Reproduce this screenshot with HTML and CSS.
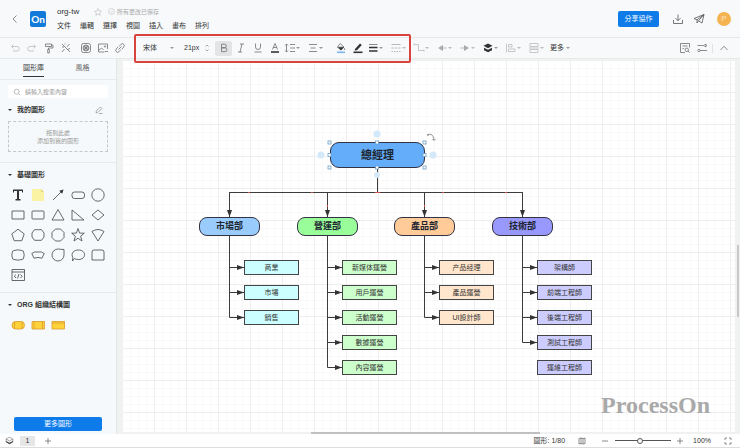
FILE: index.html
```
<!DOCTYPE html>
<html lang="zh-Hant">
<head>
	<meta charset="utf-8">
	<title>org-tw</title>
	<link rel="stylesheet" href="styles.css">
</head>
<body>
	<header class="header">
		<button class="icon-btn back" aria-label="返回"><svg width="8" height="10" viewBox="0 0 8 10"><path d="M5.5 1.5 2 5l3.5 3.5"/></svg></button>
		<div class="logo">On</div>
		<div class="doc">
			<div class="doc-title">
				<span class="doc-name">org-tw</span>
				<svg class="pale" width="8" height="8" viewBox="0 0 10 10"><path d="m5 .8 1.3 2.8 3 .4-2.2 2.1.6 3L5 7.6 2.3 9.100l.6-3L.7 4l3-.4z"/></svg>
				<svg class="pale saved-icon" width="7" height="7" viewBox="0 0 10 10"><circle cx="5" cy="5" r="4.2"/><path d="m3 5 1.5 1.5L7.2 3.7"/></svg>
				<span class="saved">所有更改已保存</span>
			</div>
			<nav class="menu">
				<button>文件</button>
				<button>編輯</button>
				<button>選擇</button>
				<button>視圖</button>
				<button>插入</button>
				<button>畫布</button>
				<button>排列</button>
			</nav>
		</div>
		<div class="header-right">
			<button class="share">分享協作</button>
			<button class="icon-btn" aria-label="下載"><svg width="12" height="12" viewBox="0 0 12 12"><path d="M6 1.5v6M3.5 5.2 6 7.7l2.5-2.5M1.5 7v3.5h9V7"/></svg></button>
			<button class="icon-btn" aria-label="發佈"><svg width="12" height="12" viewBox="0 0 12 12"><path d="M1 5.5 11 1.5 9 10 5.500 7.800 4 10V6.800zM4 6.800 11 1.500 5.500 7.800"/></svg></button>
			<span class="avatar">P</span>
		</div>
	</header>

	<div class="toolbar">
		<div class="group">
			<button class="tool pale" aria-label="撤銷"><svg width="12" height="12" viewBox="0 0 12 12"><path d="M4.5 2.500 2.500 4.500l2 2M2.500 4.500H8a2 2 0 0 1 0 4.500H4"/></svg></button>
			<button class="tool pale" aria-label="重做"><svg width="12" height="12" viewBox="0 0 12 12"><path d="m7.500 2.500 2 2-2 2M9.500 4.500H4A2 2 0 0 0 4 9h4"/></svg></button>
			<button class="tool" aria-label="格式刷"><svg width="12" height="12" viewBox="0 0 12 12"><path d="M2.500 2h6v2.500h-6zM8.500 3.200H10V6H5.500v1.500M4.700 7.500h1.600V11H4.700z"/></svg></button>
			<button class="tool" aria-label="美化"><svg width="12" height="12" viewBox="0 0 12 12"><path d="m2 2 8 8M4.500 7 2 10M9.500 2 7 4.800M2 5h2M7.500 7.500l2.500-1M5 1.500v1"/></svg></button>
		</div>
		<div class="group">
			<button class="tool" aria-label="主題"><svg width="12" height="12" viewBox="0 0 12 12"><rect x="1.500" y="1.500" width="9" height="9" rx="2"/><circle cx="6" cy="6" r="3"/><path d="M6 3v6M3 6h6M4 4l4 4M8 4 4 8"/></svg></button>
			<button class="tool" aria-label="圖片"><svg width="12" height="12" viewBox="0 0 12 12"><path d="M10.500 7V2h-9v8h6M1.500 8.500 4.500 6l2 2M8 9.500h3"/><circle cx="8" cy="4.500" r=".7"/></svg></button>
			<button class="tool" aria-label="連結"><svg width="12" height="12" viewBox="0 0 12 12"><path d="M5 4.500 7 2.300a1.900 1.900 0 0 1 2.700 2.700L8 7M7 7.500 5 9.700A1.900 1.900 0 0 1 2.300 7L4 5M4.500 7.500l3-3"/></svg></button>
		</div>
		<div class="font-group">
			<label class="font"><select aria-label="字體"><option>宋体</option></select><i class="caret"></i></label>
			<input class="size" type="text" value="21px" aria-label="字號">
			<svg class="spin" width="6" height="10" viewBox="0 0 6 10"><path d="M1.500 3.500 3 2l1.500 1.500M1.500 6.500 3 8l1.500-1.500"/></svg>
		</div>
		<div class="group">
			<button class="tool on" aria-label="粗體"><svg width="12" height="12" viewBox="0 0 12 12"><path d="M3.500 2.200h3a1.800 1.800 0 0 1 0 3.600h-3zM3.500 5.800H7a1.950 1.950 0 0 1 0 3.900H3.500z"/></svg></button>
			<button class="tool" aria-label="斜體"><svg width="12" height="12" viewBox="0 0 12 12"><path d="M5 2h4M3 10h4M7 2 5 10"/></svg></button>
			<button class="tool" aria-label="底線"><svg width="12" height="12" viewBox="0 0 12 12"><path d="M3.500 1.500V5a2.500 2.500 0 0 0 5 0V1.500M2.500 10h7"/></svg></button>
			<button class="tool" aria-label="文字顏色"><svg width="12" height="12" viewBox="0 0 12 12"><path d="M3.500 7.500 6 1.500l2.500 6M4.200 5.500h3.600"/><path class="thick" d="M2 10h8"/></svg></button>
			<button class="drop" aria-label="行高"><svg width="12" height="12" viewBox="0 0 12 12"><path d="M2.500 2v8M1 3.500 2.500 2 4 3.500M1 8.500 2.500 10 4 8.500M6 2.500h5M6 6h5M6 9.500h5"/></svg><i class="caret"></i></button>
			<button class="drop" aria-label="對齊"><svg width="12" height="12" viewBox="0 0 12 12"><path d="M2 2.500h8M3.500 6h5M2 9.500h8"/></svg><i class="caret"></i></button>
		</div>
		<div class="group">
			<button class="tool" aria-label="填充"><svg width="12" height="12" viewBox="0 0 12 12"><path d="m5 1.500 4 3.500-3 3.200-3.500-3zM2.500 5.200H9"/><path class="solid" d="M3 5.200h6L6 8.200zM9.500 6l.8 1.500H8.900z"/><path class="thick blue" d="M2 10.300h8"/></svg></button>
			<button class="tool" aria-label="線條顏色"><svg width="12" height="12" viewBox="0 0 12 12"><path class="solid" d="m3 7 5-5.500 1.800 1.600L5 8.200l-2.300.4z"/><path class="thick" d="M1.500 10.300h9"/></svg></button>
			<button class="drop" aria-label="線寬"><svg width="12" height="12" viewBox="0 0 12 12"><path d="M2 2.500h8.500"/><path class="thick" d="M2 5.500h8.500M2 9h8.500"/></svg><i class="caret"></i></button>
			<button class="drop light" aria-label="線型"><svg width="12" height="12" viewBox="0 0 12 12"><path d="M1.500 2.500h9M1.500 6h2.500m1 0h2.500m1 0h2M1.500 9.500h1.500m1 0h1.500m1 0h1.500m1 0h1.500"/></svg><i class="caret"></i></button>
			<button class="drop pale" aria-label="連線類型"><svg width="12" height="12" viewBox="0 0 12 12"><path d="M1 2.500h4.500v6H11M1 1.500v2M11 7.500v2"/></svg><i class="caret"></i></button>
			<button class="drop light" aria-label="起點"><svg width="12" height="12" viewBox="0 0 12 12"><path class="solid" d="M2 6 7 3v6z"/><path d="M6 6h4.500"/></svg><i class="caret"></i></button>
			<button class="drop light" aria-label="終點"><svg width="12" height="12" viewBox="0 0 12 12"><path class="solid" d="M10 6 5 3v6z"/><path d="M1.500 6H6"/></svg><i class="caret"></i></button>
			<button class="drop" aria-label="圖層"><svg width="12" height="12" viewBox="0 0 12 12"><path class="solid" d="m6 1.500 4.500 2.300L6 6.200 1.500 3.800z"/><path class="solid" d="m2 5.700 4 2 4-2v2.500l-4 2-4-2z"/></svg><i class="caret"></i></button>
			<button class="drop pale" aria-label="排列對齊"><svg width="12" height="12" viewBox="0 0 12 12"><path d="M1.500 1.500v9M3.500 2.500h3.500v2.500H3.500zM3.500 7h6.500v2.500H3.500z"/></svg><i class="caret"></i></button>
			<button class="drop pale" aria-label="分佈"><svg width="12" height="12" viewBox="0 0 12 12"><path d="M2 1.500h8v3H2zM1 6h10M2 7.500h8v3H2z"/></svg><i class="caret"></i></button>
			<button class="more">更多<i class="caret"></i></button>
		</div>
		<div class="toolbar-right">
			<button class="tool" aria-label="查找"><svg width="12" height="12" viewBox="0 0 12 12"><path d="M10.500 5.500v-4h-9v9H6M3.500 4h5M3.500 6.500H5"/><circle cx="7.800" cy="7.800" r="1.700"/><path d="m9 9 1.700 1.700"/></svg></button>
			<button class="tool" aria-label="設定"><svg width="12" height="12" viewBox="0 0 12 12"><path d="M1.500 3.500H8M4 8.500h7M9 2v3l2-1.500z"/><circle cx="3" cy="8.500" r="1.200"/></svg></button>
			<i class="sep"></i>
			<button class="tool" aria-label="收起"><svg width="12" height="12" viewBox="0 0 12 12"><path d="M2.500 8 6 4.300 9.500 8"/></svg></button>
		</div>
		<div class="highlight"></div>
	</div>

	<main class="main">
		<aside class="sidebar">
			<div class="tabs">
				<button class="tab active">圖形庫</button>
				<button class="tab">風格</button>
			</div>
			<label class="search">
				<svg width="8" height="8" viewBox="0 0 8 8"><circle cx="3.700" cy="3.700" r="2.500"/><path d="m5.500 5.500 1.500 1.500"/></svg>
				<input type="text" placeholder="請輸入搜索內容" aria-label="搜索">
			</label>
			<section class="panel mine">
				<h2><i class="caret"></i>我的圖形<svg class="edit" width="8" height="8" viewBox="0 0 8 8"><path d="M1 6.800 1.300 5 5.300 1l1.500 1.500-4 4zM4 7.500h3.500"/></svg></h2>
				<div class="dropzone">拖到此處<br>添加到我的圖形</div>
			</section>
			<section class="panel">
				<h2><i class="caret"></i>基礎圖形</h2>
				<div class="shapes">
					<svg viewBox="0 0 20 20"><path class="ink" d="M5 4.500h10v3h-1V6h-3v8h1.500v1.500h-5V14H9V6H6v1.500H5z"/></svg>
					<svg viewBox="0 0 20 20"><path class="note" d="M4 4h9l3 3v9H4z"/><path class="fold" d="M13 4v3h3z"/></svg>
					<svg viewBox="0 0 20 20"><path d="m5 15 9-9"/><path class="ink" d="m15.500 4.500-1.300 4.200-2.900-2.900z"/></svg>
					<svg viewBox="0 0 20 20"><rect x="4" y="7" width="12.500" height="6.500" rx="2.500"/></svg>
					<svg viewBox="0 0 20 20"><circle cx="10" cy="10" r="6.200"/></svg>
					<svg viewBox="0 0 20 20"><path d="M4 6h12v8H4z"/></svg>
					<svg viewBox="0 0 20 20"><rect x="4" y="6" width="12" height="8" rx=".8"/></svg>
					<svg viewBox="0 0 20 20"><path d="m10 4.500 6 10.500H4z"/></svg>
					<svg viewBox="0 0 20 20"><path d="M4 5v10h12z"/></svg>
					<svg viewBox="0 0 20 20"><path d="m10 5 6 5-6 5-6-5z"/></svg>
					<svg viewBox="0 0 20 20"><path d="m10 4.200 6.200 4.700-2.400 6.800H6.200L3.800 8.900z"/></svg>
					<svg viewBox="0 0 20 20"><path d="M6.500 4.700h7L16 8v4l-2.500 3.300h-7L4 12V8z"/></svg>
					<svg viewBox="0 0 20 20"><path d="M7.500 4h5L16 7.500v5L12.500 16h-5L4 12.500v-5z"/></svg>
					<svg viewBox="0 0 20 20"><path d="m10 3.500 1.600 4.600 4.700.1-3.700 3 1.400 4.800-4-2.800L6 16l1.400-4.800-3.700-3 4.700-.1z"/></svg>
					<svg viewBox="0 0 20 20"><path d="M4 6.500q6-4 12 0L10 16z"/></svg>
					<svg viewBox="0 0 20 20"><path d="M6 5.500q4-1.300 8 0 2 .2 1.800 2.500.8 2 0 4 .2 2.300-1.800 2.500-4 1.300-8 0-2-.2-1.800-2.500-.8-2 0-4Q4 5.700 6 5.500z"/></svg>
					<svg viewBox="0 0 20 20"><path d="M3.800 8.500q2.700-2.300 6.200-1.500 3.500-.8 6.200 1.500l-2.200 4.700q-4-1.500-8 0z"/></svg>
					<svg viewBox="0 0 20 20"><path d="M16 4.500V10a6 6 0 1 1-6-6q3 .4 6 .5z"/></svg>
					<svg viewBox="0 0 20 20"><path d="M6.300 13.500 4.500 16l.3-3.500C2.500 8 6 5 10.500 5c8 0 8 9.500 0 9.500q-2.500 0-4.200-1z"/></svg>
					<svg viewBox="0 0 20 20"><path d="M4 15V7q0-2 2-2h8q2 0 2 2v8z"/></svg>
					<svg viewBox="0 0 20 20"><path d="M4 4.500h12.500v11H4zM4 7h12.500M8 9.500 6.300 11.200 8 13M12.500 9.500l1.700 1.700-1.700 1.800M11 9l-1.500 4.500"/></svg>
				</div>
			</section>
			<section class="panel">
				<h2><i class="caret"></i>ORG 組織結構圖</h2>
				<div class="shapes gold">
					<svg viewBox="0 0 20 20"><rect x="4" y="6.500" width="12.500" height="7.500" rx="3.700"/><path d="M6.500 6.500v7.500M14 6.500v7.500"/></svg>
					<svg viewBox="0 0 20 20"><path d="M4 6.500h12.500V14H4zM6 6.500V14M14.500 6.500V14"/></svg>
					<svg viewBox="0 0 20 20"><path d="M4 6.500h12.500V14H4zM4 8h12.500"/></svg>
				</div>
			</section>
			<button class="more-shapes">更多圖形</button>
		</aside>

		<div class="canvas-wrap">
			<div class="canvas">
				<svg class="lines" width="612" height="371">
					<defs>
						<marker id="arrow" viewBox="0 0 7 5" refX="7" refY="2.500" markerWidth="7" markerHeight="5" markerUnits="userSpaceOnUse" orient="auto"><path d="M0 0 7 2.500 0 5z"/></marker>
					</defs>
					<path class="line" d="M254.500 107v24.500M106.500 131.500h293"/>
					<!-- trunk to departments -->
					<g class="line arrow">
						<path d="M106.500 131v25"/><path d="M204.500 131v25"/><path d="M301.500 131v25"/><path d="M399.500 131v25"/>
					</g>
					<path class="line" d="M106.500 175v81.500M204.500 175v131.500M301.500 175v81.500M399.500 175v106.500"/>
					<!-- departments to teams -->
					<g class="line arrow">
						<path d="M106.500 206.500H121"/><path d="M106.500 231.500H121"/><path d="M106.500 256.500H121"/>
						<path d="M204.500 206.500H219"/><path d="M204.500 231.500H219"/><path d="M204.500 256.500H219"/><path d="M204.500 281.500H219"/><path d="M204.500 306.500H219"/>
						<path d="M301.500 206.500H316"/><path d="M301.500 231.500H316"/><path d="M301.500 256.500H316"/>
						<path d="M399.500 206.500H414"/><path d="M399.500 231.500H414"/><path d="M399.500 256.500H414"/><path d="M399.500 281.500H414"/>
					</g>
					<path class="red" d="M125 131.500h2M188 131.500h2M252 131.500h5M319 131.500h2M382 131.500h2M204.500 144v2M301.500 144v2"/>
				</svg>

				<div class="node root">總經理</div>
				<svg class="handles" width="124" height="52" viewBox="0 0 124 52">
					<g class="port"><circle cx="62" cy="8" r="3.500"/><circle cx="62" cy="49" r="3"/><circle cx="6" cy="29" r="3.500"/><circle cx="118" cy="29" r="3.500"/></g>
					<g class="grip">
						<rect x="13" y="15" width="3" height="3"/><rect x="60.500" y="15" width="3" height="3"/><rect x="108" y="15" width="3" height="3"/>
						<rect x="13" y="27.500" width="3" height="3"/><rect x="108" y="27.500" width="3" height="3"/>
						<rect x="13" y="40" width="3" height="3"/><rect x="60.500" y="40" width="3" height="3"/><rect x="108" y="40" width="3" height="3"/>
					</g>
					<path class="rotate" d="M112 9q6-3 7 5M112 9h2M117.500 13l1.500 1.500 1.500-1.500"/>
				</svg>

				<div class="branch market">
					<div class="node dept">市場部</div>
					<ul><li>商業</li><li>市場</li><li>銷售</li></ul>
				</div>
				<div class="branch operation">
					<div class="node dept">營運部</div>
					<ul><li>新媒体運營</li><li>用戶運營</li><li>活動運營</li><li>數據運營</li><li>內容運營</li></ul>
				</div>
				<div class="branch product">
					<div class="node dept">產品部</div>
					<ul><li>产品经理</li><li>產品運營</li><li>UI設計師</li></ul>
				</div>
				<div class="branch tech">
					<div class="node dept">技術部</div>
					<ul><li>架構師</li><li>前端工程師</li><li>後端工程師</li><li>測試工程師</li><li>運維工程師</li></ul>
				</div>
				<div class="watermark">ProcessOn</div>
			</div>
			<div class="scroll-x"></div>
			<div class="scroll-y"></div>
		</div>
	</main>

	<footer class="footer">
		<svg width="9" height="9" viewBox="0 0 12 12"><path d="m6 1.500 4.500 2.500L6 6.500 1.500 4zM1.500 4v4L6 10.500 10.500 8V4"/><path class="solid" d="M1.500 6.500 6 9l4.500-2.500V8L6 10.500 1.500 8z"/></svg>
		<button class="page">1</button>
		<button class="icon-btn" aria-label="新增頁面"><svg width="8" height="8" viewBox="0 0 8 8"><path d="M4 1v6M1 4h6"/></svg></button>
		<div class="footer-right">
			<span class="count">圖形: 1/80</span>
			<svg class="map" width="8" height="8" viewBox="0 0 8 8"><path d="M1 1.500 3 1l2 .5L7 1v5.500L5 7l-2-.5L1 7zM3 1v5.500M5 1.500V7"/></svg>
			<button class="icon-btn" aria-label="縮小"><svg width="8" height="8" viewBox="0 0 8 8"><path d="M1 4h6"/></svg></button>
			<input class="zoom" type="range" min="0" max="100" value="44" aria-label="縮放">
			<button class="icon-btn" aria-label="放大"><svg width="8" height="8" viewBox="0 0 8 8"><path d="M4 1v6M1 4h6"/></svg></button>
			<span class="percent">100%</span>
			<button class="icon-btn" aria-label="全屏"><svg width="8" height="8" viewBox="0 0 8 8"><path d="M1 3V1h2M5 1h2v2M7 5v2H5M3 7H1V5"/></svg></button>
		</div>
	</footer>
</body>
</html>
```
FILE: styles.css
```
* {
	box-sizing: border-box;
}
body {
	margin: 0;
	height: 100vh;
	display: flex;
	flex-direction: column;
	overflow: hidden;
	background-color: white;
	color: #333;
	font: 7px/10px "Liberation Sans", "Noto Sans CJK TC", sans-serif;
}
button, input, select {
	margin: 0;
	padding: 0;
	border: 0;
	background: none;
	color: inherit;
	font: inherit;
	outline: none;
}
svg {
	display: block;
	flex: none;
	fill: none;
	stroke: #707070;
	stroke-width: 0.8;
}
.solid {
	fill: #333;
	stroke: none;
}
.thick {
	stroke: #333;
	stroke-width: 1.6;
}
.blue {
	stroke: #7db5ee;
}
.pale, .pale svg {
	stroke: #bbb;
}
.light .solid {
	fill: #aaa;
}
.light svg {
	stroke: #aaa;
}
.caret {
	flex: none;
	width: 4px;
	height: 2px;
	background-color: #999;
	clip-path: polygon(0 0, 100% 0, 50% 100%);
}
.pale .caret, .light .caret {
	background-color: #bbb;
}
.icon-btn {
	display: flex;
	align-items: center;
	justify-content: center;
}

/* header */
.header {
	display: flex;
	align-items: center;
	height: 38px;
	padding: 0 9px 0 11px;
	background-color: #f7f9fb;
	border-bottom: 1px solid #e6e8ea;
}
.logo {
	width: 16px;
	height: 16px;
	margin-left: 11px;
	border-radius: 2px;
	background-color: #127ad8;
	color: white;
	font: bold 10px/16px Lato, sans-serif;
	text-align: center;
}
.doc {
	margin-left: 11px;
}
.doc-title {
	display: flex;
	align-items: center;
	height: 14px;
}
.doc-name {
	width: 37px;
	font-size: 8px;
}
.saved-icon {
	margin-left: 6px;
}
.saved {
	margin-left: 2px;
	color: #aaa;
	font-size: 6px;
}
.menu {
	display: flex;
	gap: 9px;
}
.menu button {
	height: 14px;
}
.header-right {
	display: flex;
	align-items: center;
	gap: 9px;
	margin-left: auto;
}
.share {
	width: 41px;
	height: 16px;
	margin-right: 4px;
	border-radius: 2px;
	background-color: #0d7be8;
	color: white;
}
.header-right svg {
	stroke: #555;
}
.avatar {
	width: 14px;
	height: 14px;
	margin-left: 3px;
	border-radius: 50%;
	background-color: #f5b350;
	color: #fbe3c0;
	font-size: 8px;
	line-height: 14px;
	text-align: center;
}

/* toolbar */
.toolbar {
	position: relative;
	display: flex;
	align-items: center;
	height: 21px;
	padding: 0 8px 0 6px;
	background-color: #f7f9fb;
	border-bottom: 1px solid #e6e8ea;
}
.group {
	display: flex;
	align-items: center;
	margin-right: 3px;
}
.tool {
	display: flex;
	align-items: center;
	justify-content: center;
	width: 17px;
	height: 15px;
	border-radius: 2px;
}
.tool.on {
	background-color: #e2e4e6;
}
.drop {
	display: flex;
	align-items: center;
	width: 23px;
	padding-left: 1px;
}
.more {
	display: flex;
	align-items: center;
	gap: 2px;
}
.font-group {
	display: flex;
	align-items: center;
	width: 84px;
	padding-left: 12px;
}
.font {
	display: flex;
	align-items: center;
	width: 41px;
}
.font select {
	width: 27px;
	appearance: none;
}
.size {
	width: 20px;
}
.spin {
	stroke: #999;
}
.toolbar-right {
	display: flex;
	align-items: center;
	margin-left: auto;
}
.sep {
	width: 1px;
	height: 9px;
	margin: 0 2px;
	background-color: #e2e2e2;
}
.highlight {
	position: absolute;
	left: 134px;
	top: -4px;
	width: 277px;
	height: 29px;
	border: 2px solid #d8433c;
	border-radius: 2px;
	pointer-events: none;
	z-index: 2;
}

/* sidebar */
.main {
	display: flex;
	flex: 1;
	min-height: 0;
}
.sidebar {
	display: flex;
	flex-direction: column;
	width: 117px;
	background-color: #f6f9fb;
	border-right: 1px solid #e4e6e8;
}
.tabs {
	display: flex;
	justify-content: center;
	height: 21px;
	border-bottom: 1px solid #e8eaec;
}
.tab {
	display: flex;
	justify-content: center;
	width: 49px;
	line-height: 18px;
	color: #666;
}
.tab.active {
	color: #333;
	text-decoration: underline 1px;
	text-underline-offset: 6px;
}
.search {
	display: flex;
	align-items: center;
	height: 13px;
	margin: 5px 8px 0;
	padding-left: 5px;
	background-color: white;
}
.search svg {
	stroke: #aaa;
}
.search input {
	width: 80px;
	margin-left: 4px;
	font-size: 6px;
}
.search input::placeholder {
	color: #999;
}
.panel {
	padding: 6px 8px 7px;
	border-bottom: 1px solid #e8eaec;
}
.panel:last-of-type {
	border-bottom: 0;
}
.panel.mine {
	padding-bottom: 10px;
}
.panel h2 {
	display: flex;
	align-items: center;
	height: 12px;
	margin: 0;
	font-size: 7px;
}
.panel h2 .caret {
	margin-right: 5px;
	background-color: #333;
}
.edit {
	margin: 0 5px 0 auto;
	stroke: #999;
}
.dropzone {
	height: 31px;
	margin-top: 5px;
	padding-top: 7px;
	border: 1px dashed #c4c8cc;
	color: #999;
	font-size: 6px;
	line-height: 8px;
	text-align: center;
}
.shapes {
	display: grid;
	grid-template-columns: repeat(5, 20px);
	margin-top: 4px;
}
.shapes svg {
	width: 20px;
	height: 20px;
	stroke: #444;
}
.shapes .ink {
	fill: #333;
	stroke: none;
}
.shapes .note {
	fill: #fbf3a4;
	stroke: none;
}
.shapes .fold {
	fill: #e5d878;
	stroke: none;
}
.gold svg {
	fill: #ffd23c;
	stroke: #d89c28;
}
.more-shapes {
	height: 14px;
	margin: auto 14px 3px;
	border-radius: 2px;
	background-color: #0d7bea;
	color: white;
}

/* canvas */
.canvas-wrap {
	position: relative;
	flex: 1;
	padding: 2px 5px 2px 6px;
	background-color: #f0f1f1;
}
.canvas {
	position: relative;
	height: 100%;
	overflow: hidden;
	background-color: white;
	background-image:
		linear-gradient(#eee 1px, transparent 1px),
		linear-gradient(90deg, #eee 1px, transparent 1px),
		linear-gradient(#f9f9f9 1px, transparent 1px),
		linear-gradient(90deg, #f9f9f9 1px, transparent 1px);
	background-size: 32px 32px, 32px 32px, 8px 8px, 8px 8px;
	background-position: 31px 31px;
}
.lines {
	position: absolute;
	left: 0;
	top: 0;
}
.line {
	stroke: #3c3c3c;
	stroke-width: 1;
}
.arrow path {
	marker-end: url(#arrow);
}
marker path {
	fill: #333;
	stroke: none;
}
.red {
	stroke: #d0504c;
	stroke-width: 1;
}
.node {
	border: 1px solid #334;
	color: #1c2530;
	font-family: "Liberation Serif", "Noto Sans CJK TC", serif;
	font-weight: bold;
	text-align: center;
}
.root {
	position: absolute;
	left: 207px;
	top: 81px;
	width: 95px;
	height: 26px;
	border-radius: 9px;
	background-color: #63adfb;
	font-size: 11px;
	line-height: 24px;
}
.handles {
	position: absolute;
	left: 192px;
	top: 65px;
}
.port {
	fill: #d3e8f9;
	stroke: none;
}
.grip {
	fill: white;
	stroke: #6d9fc4;
}
.rotate {
	stroke: #777;
}
.branch {
	position: absolute;
	top: 156px;
}
.market {
	left: 76px;
}
.operation {
	left: 174px;
}
.product {
	left: 271px;
}
.tech {
	left: 369px;
}
.dept {
	width: 61px;
	height: 19px;
	border-radius: 8px;
	font-size: 9px;
	line-height: 17px;
}
.branch ul {
	display: flex;
	flex-direction: column;
	gap: 10px;
	margin: 24px 0 0 45px;
	padding: 0;
	list-style: none;
}
.branch li {
	width: 55px;
	height: 15px;
	border: 1px solid #444;
	line-height: 13px;
	text-align: center;
}
.market .dept {
	background-color: #99ccfc;
}
.market li {
	background-color: #ccffff;
}
.operation .dept {
	background-color: #99fd99;
}
.operation li {
	background-color: #ccffcc;
}
.product .dept {
	background-color: #ffcc99;
}
.product li {
	background-color: #ffe6cc;
}
.tech .dept {
	background-color: #9999fd;
}
.tech li {
	background-color: #ccccff;
}
.watermark {
	position: absolute;
	right: 25px;
	bottom: 13px;
	color: #a9a9a9;
	font: bold 24px/28px "Liberation Serif", serif;
}
.scroll-x {
	position: absolute;
	left: 194px;
	bottom: 0;
	width: 229px;
	height: 2px;
	background-color: #c0c0c0;
}
.scroll-y {
	position: absolute;
	right: 1px;
	top: 186px;
	width: 2px;
	height: 72px;
	background-color: #c8c8c8;
}

/* footer */
.footer {
	display: flex;
	align-items: center;
	height: 14px;
	padding: 0 8px 0 5px;
	border-bottom: 1px solid #ddd;
}
.page {
	width: 15px;
	height: 10px;
	margin: 0 9px 0 6px;
	background-color: #e6e6e6;
}
.footer-right {
	display: flex;
	align-items: center;
	margin-left: auto;
}
.map {
	margin: 0 15px 0 13px;
}
.zoom {
	appearance: none;
	width: 56px;
	height: 7px;
	margin: 0 5px 0 6px;
	background: linear-gradient(#555, #555) center / 100% 1px no-repeat;
}
.zoom::-webkit-slider-thumb {
	appearance: none;
	width: 6px;
	height: 6px;
	border: 1px solid #555;
	border-radius: 50%;
	background-color: white;
}
.percent {
	margin: 0 13px 0 9px;
}
```
